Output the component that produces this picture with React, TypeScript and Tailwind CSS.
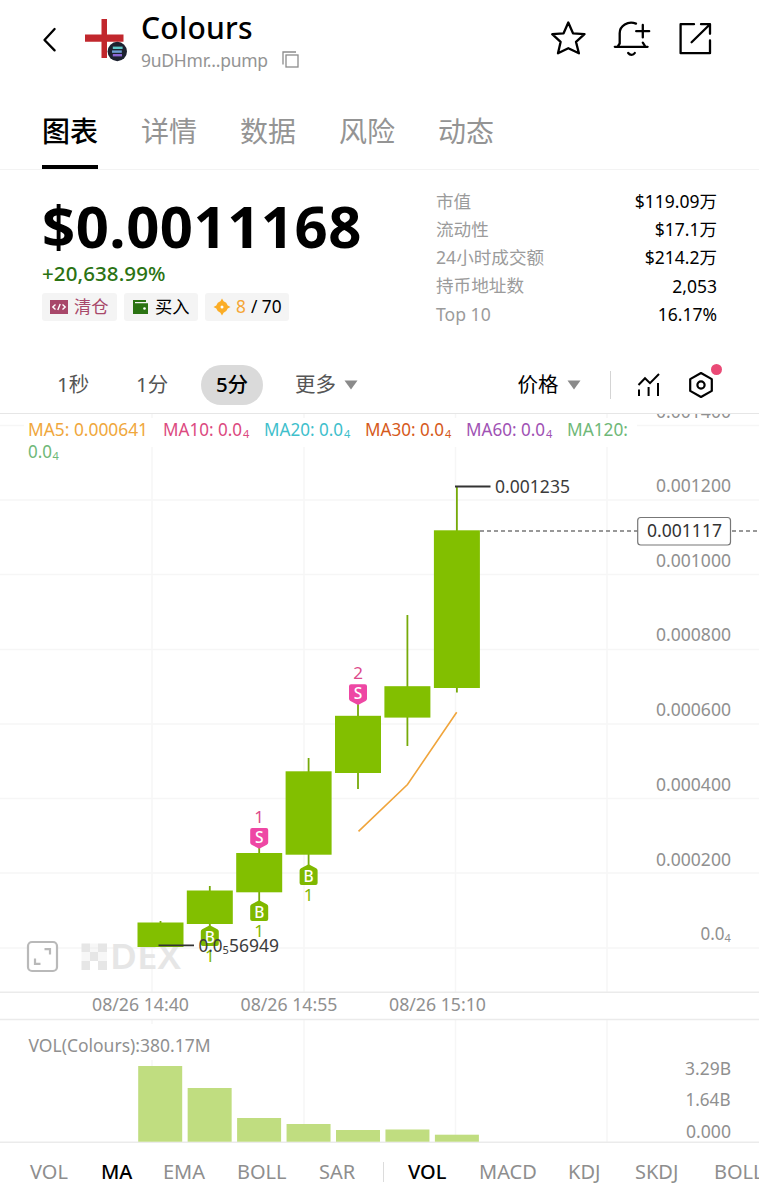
import React from 'react';
import clsx from 'clsx';

const tabs = ['图表', '详情', '数据', '风险', '动态'];

const stats = [
  { label: '市值', value: '$119.09万' },
  { label: '流动性', value: '$17.1万' },
  { label: '24小时成交额', value: '$214.2万' },
  { label: '持币地址数', value: '2,053' },
  { label: 'Top 10', value: '16.17%' },
];

const legend = [
  { name: 'MA5: 0.000641', sub: '', x: 28, width: 120, color: '#f0a73c' },
  { name: 'MA10: 0.0', sub: '4', x: 163, width: 79, color: '#dc4a7f' },
  { name: 'MA20: 0.0', sub: '4', x: 264, width: 79, color: '#3fc0cc' },
  { name: 'MA30: 0.0', sub: '4', x: 365, width: 79, color: '#d65a1b' },
  { name: 'MA60: 0.0', sub: '4', x: 466, width: 79, color: '#a052b4' },
  { name: 'MA120:', sub: '', x: 567, width: 61, color: '#6fb878' },
];

const candles = [
  { x: 160.5, high: 921, top: 922.5, bottom: 947, low: 947 },
  { x: 209.8, high: 886, top: 890.5, bottom: 924, low: 926 },
  { x: 259.2, high: 848, top: 853, bottom: 892.3, low: 901 },
  { x: 308.6, high: 758, top: 771.3, bottom: 854.7, low: 866 },
  { x: 358, high: 704, top: 715.8, bottom: 773, low: 789 },
  { x: 407.4, high: 615, top: 686.2, bottom: 717.6, low: 746 },
  { x: 456.9, high: 487, top: 530.3, bottom: 688, low: 692.5 },
];

const volumes = [1066, 1088, 1118, 1124, 1130, 1129.5, 1134.7];

const priceLabels = [
  { text: '0.001200', y: 492 },
  { text: '0.001000', y: 566.5 },
  { text: '0.000800', y: 641 },
  { text: '0.000600', y: 716 },
  { text: '0.000400', y: 790.5 },
  { text: '0.000200', y: 865.5 },
];

const indicators = [
  { name: 'VOL', width: 'w-[71px]', active: false },
  { name: 'MA', width: 'w-[62px]', active: true },
  { name: 'EMA', width: 'w-[74px]', active: false },
  { name: 'BOLL', width: 'w-[82px]', active: false },
  { name: 'SAR', width: 'w-[64px]', active: false },
];

const subIndicators = [
  { name: 'VOL', width: 'w-[71px]', active: true },
  { name: 'MACD', width: 'w-[89px]', active: false },
  { name: 'KDJ', width: 'w-[67px]', active: false },
  { name: 'SKDJ', width: 'w-[79px]', active: false },
  { name: 'BOLL', width: 'w-[60px]', active: false },
];

const TokenLogo: React.FC = () => (
  <svg width="44" height="46" viewBox="0 0 44 46" className="block">
    <path d="M17.5 1H23V16.5H39.5V23.8H23V40H17.5V23.8H1V16.5H17.5Z" fill="#c1272d" />
    <circle cx="33.3" cy="33.5" r="9.7" fill="#1d2230" />
    <g strokeWidth="2.4">
      <path d="M28.8 29.8H38.6" stroke="#5fc9c9" />
      <path d="M28 33.6H37.8" stroke="#6f9fd6" />
      <path d="M28.8 37.2H38" stroke="#8b66d6" />
    </g>
  </svg>
);

const Header: React.FC = () => (
  <header className="flex h-[92px] items-start pl-[42px] pr-[45px]">
    <svg width="16" height="26" viewBox="0 0 16 26" className="mt-[27px] block" fill="none">
      <path d="M12.6 2L2.5 13L12.6 23.4" stroke="#000" strokeWidth="2.3" strokeLinecap="round" strokeLinejoin="round" />
    </svg>
    <div className="ml-[26px] mt-[18px]">
      <TokenLogo />
    </div>
    <div className="ml-[13px] mt-[8px]">
      <div className="h-10 whitespace-nowrap text-[30px] font-medium leading-10 tracking-[0.3px] text-black">Colours</div>
      <div className="flex h-6 items-center gap-[14px]">
        <span className="whitespace-nowrap text-[17.5px] leading-6 tracking-[-0.25px] text-[#949494]">9uDHmr...pump</span>
        <svg width="18" height="18" viewBox="0 0 18 18" fill="none" stroke="#8c8c8c" strokeWidth="1.3">
          <path d="M1 13.5V1H14" />
          <rect x="4" y="4" width="12" height="12" />
        </svg>
      </div>
    </div>
    <div className="ml-auto mt-[19px] flex gap-[26px]">
      <svg width="38" height="40" viewBox="0 0 38 40" fill="none" stroke="#000" strokeWidth="2.3" strokeLinejoin="round">
        <path d="M19.3 3.5L24 14.3L35.5 15.2L27 22.9L29.9 34.3L19.3 29.2L9 34.3L11.6 22.9L3.2 15.2L14.6 14.3Z" />
      </svg>
      <svg width="38" height="40" viewBox="0 0 38 40" fill="none" stroke="#000" strokeWidth="2.3" strokeLinecap="round" strokeLinejoin="round">
        <path d="M23 4.6C14.8 1.5 6.7 6.8 6.7 14.2V24.5L4.5 27.8M1.8 27.8H34.6M32 27L29.8 23.6" />
        <path d="M29.8 6V18.4M23.2 12.2H36.2" />
        <path d="M15.2 34C17 36.6 20.2 36.6 21.8 34" />
      </svg>
      <svg width="37" height="40" viewBox="0 0 37 40" fill="none" stroke="#000" strokeWidth="2.3" strokeLinecap="round" strokeLinejoin="round">
        <path d="M17 5.2H3.6V34.2H33V21.5" />
        <path d="M24 5.2H33V14.8M32.5 5.7L14.6 23.2" />
      </svg>
    </div>
  </header>
);

const Badge: React.FC<{ className: string; children: React.ReactNode }> = ({ className, children }) => (
  <div className={clsx('flex h-7 items-center rounded-[3px] bg-[#f4f4f4] pl-2 text-[17.3px] leading-7 whitespace-nowrap', className)}>
    {children}
  </div>
);

const Summary: React.FC = () => (
  <section className="flex h-[186px] pl-[42px] pr-[42px]">
    <div className="w-[394px]">
      <div className="mt-[20px] h-[72px] whitespace-nowrap text-[58px] font-bold leading-[72px] tracking-[0.5px] text-black">
        $0.0011168
      </div>
      <div className="h-[31px] whitespace-nowrap text-[20.5px] font-medium leading-[22px] tracking-[0.1px] text-[#2b7313]">+20,638.99%</div>
      <div className="flex gap-[7px]">
        <Badge className="w-[75px] text-[#a8486a]">
          <svg width="18" height="14" viewBox="0 0 18 14" className="mr-[6px]">
            <rect width="18" height="14" fill="#a8486a" />
            <path d="M5.5 4.5L2.8 7L5.5 9.5M12.5 4.5L15.2 7L12.5 9.5M10.2 4L7.8 10" stroke="#fff" strokeWidth="1.4" fill="none" />
          </svg>
          清仓
        </Badge>
        <Badge className="w-[74px] pl-[9px] text-black">
          <svg width="15" height="14" viewBox="0 0 15 14" className="mr-[7px]">
            <path d="M0 0H13V2H2V3.2H15V14H0Z" fill="#2b7313" />
            <circle cx="11.5" cy="8.5" r="1.3" fill="#fff" />
          </svg>
          买入
        </Badge>
        <Badge className="w-[84px] text-black">
          <svg width="18" height="18" viewBox="0 0 18 18" className="mr-[5px]">
            <path d="M9 0.5L10.6 3.3A5.9 5.9 0 0 1 14.7 7.4L17.5 9L14.7 10.6A5.9 5.9 0 0 1 10.6 14.7L9 17.5L7.4 14.7A5.9 5.9 0 0 1 3.3 10.6L0.5 9L3.3 7.4A5.9 5.9 0 0 1 7.4 3.3Z" fill="#fbad26" />
            <circle cx="9" cy="9" r="1.5" fill="#fff" />
          </svg>
          <span className="text-[#f5a637]">8</span>
          <span className="ml-[5px]">/ 70</span>
        </Badge>
      </div>
    </div>
    <dl className="mt-[17px] flex-1">
      {stats.map((item) => (
        <div key={item.label} className="flex h-[28.2px] items-center justify-between whitespace-nowrap text-[17.6px]">
          <dt className="text-[#9b9b9b]">{item.label}</dt>
          <dd className="text-[17.5px] text-black">{item.value}</dd>
        </div>
      ))}
    </dl>
  </section>
);

const Caret: React.FC = () => (
  <svg width="14" height="10" viewBox="0 0 14 10" className="ml-2 block">
    <path d="M0.5 0.5H13.5L7 9.5Z" fill="#8a8a8a" />
  </svg>
);

const Toolbar: React.FC = () => (
  <div className="flex h-[58px] items-center border-b border-[#e6e6e6] pl-[57px] pr-[44px] text-[20.5px] text-[#555]">
    <div className="w-[79px]">1秒</div>
    <div className="w-[65px]">1分</div>
    <div className="flex h-10 w-[62px] items-center justify-center rounded-full bg-[#dadada] font-medium text-black">5分</div>
    <div className="ml-8 flex items-center">
      更多
      <Caret />
    </div>
    <div className="ml-auto flex items-center text-black">
      价格
      <Caret />
      <div className="ml-[29px] h-7 w-[1.5px] bg-[#d4d4d4]" />
      <svg width="24" height="26" viewBox="0 0 24 26" fill="none" stroke="#000" strokeWidth="2" className="ml-[26px]">
        <path d="M1.5 13L8 6.2L13 11.2L22 2" />
        <path d="M2 17.5V24M11.6 15V24M21 11V24" />
      </svg>
      <div className="relative ml-[26px]">
        <svg width="28" height="28" viewBox="0 0 28 28" fill="none" stroke="#000" strokeWidth="2.2" strokeLinejoin="round">
          <path d="M14 2L24.8 8.1V19.9L14 26L3.2 19.9V8.1Z" />
          <circle cx="14" cy="14" r="3.6" />
        </svg>
        <span className="absolute -right-[7px] -top-[7px] h-[11px] w-[11px] rounded-full bg-[#ea4a76]" />
      </div>
    </div>
  </div>
);

/* Trade marker: sells sit above a candle and point down, buys sit below and point up */
const Marker: React.FC<{ x: number; y: number; type: 'B' | 'S'; count: string }> = ({ x, y, type, count }) => {
  const color = type === 'S' ? '#ee47a4' : '#7fb800';
  const shape =
    type === 'S'
      ? 'M-7 -10H7Q9 -10 9 -8V4.5Q9 6 7.6 6.7L0 10.8L-7.6 6.7Q-9 6 -9 4.5V-8Q-9 -10 -7 -10Z'
      : 'M-7 10H7Q9 10 9 8V-4.5Q9 -6 7.6 -6.7L0 -10.8L-7.6 -6.7Q-9 -6 -9 -4.5V8Q-9 10 -7 10Z';
  return (
    <g transform={`translate(${x} ${y})`} textAnchor="middle">
      <path d={shape} fill={color} />
      <text y={type === 'S' ? 5 : 6.5} fontSize="15.5" fontWeight="500" fill="#fff">
        {type}
      </text>
      <text y={type === 'S' ? -15 : 26} fontSize="17" fill={type === 'S' ? '#dc4a8c' : color}>
        {count}
      </text>
    </g>
  );
};

const Chart: React.FC = () => (
  <svg width="759" height="729" viewBox="0 414 759 729" className="block" fontSize="17.3">
    {/* Grid */}
    <g stroke="#f6f6f6" strokeWidth="1.5">
      {[425.5, 500, 574.5, 649.5, 724, 798.5, 873, 948].map((y) => (
        <path key={y} d={`M0 ${y}H759`} />
      ))}
      {[152, 304, 455.5, 607].map((x) => (
        <path key={x} d={`M${x} 414V992M${x} 1020V1142`} />
      ))}
      <path d="M0 992.3H759M0 1019.5H759M0 1142.3H759" stroke="#ebebeb" />
    </g>
    <path d="M24 418H637V447H60V465H24Z" fill="#fff" />
    <path d="M24 1024H214V1060H24Z" fill="#fff" />

    {/* Moving average legend */}
    {legend.map((item) => (
      <g key={item.name} fill={item.color}>
        <text x={item.x} y="436" textLength={item.width} lengthAdjust="spacingAndGlyphs">
          {item.name}
        </text>
        <text x={item.x + item.width + 1} y="438" fontSize="11">
          {item.sub}
        </text>
      </g>
    ))}
    <g fill="#6fb878">
      <text x="28" y="457.5" textLength="24" lengthAdjust="spacingAndGlyphs">0.0</text>
      <text x="52.5" y="459.5" fontSize="11">4</text>
    </g>

    {/* Watermark */}
    <g fill="#e6e6e6">
      <path d="M81.5 943.5H90V952H81.5ZM98 943.5H107V952H98ZM90 952H98V961H90ZM81.5 961H90V970H81.5ZM98 961H107V970H98Z" />
      <path d="M90 943.5H98V952H90ZM81.5 952H90V961H81.5ZM98 952H107V961H98Z" opacity="0.3" />
      <text x="110" y="969" fontSize="35" fontWeight="600" textLength="71" lengthAdjust="spacingAndGlyphs">
        DEX
      </text>
    </g>
    <g fill="none" stroke="#b9b9b9" strokeWidth="2.2">
      <rect x="28" y="942" width="29" height="29" rx="4" fill="#fff" />
      <path d="M44.5 949.2H50V954.5M35 958.5V963.8H40.5" />
    </g>

    {/* Candles */}
    {candles.map((c) => (
      <g key={c.x} fill="#82bf00">
        <path d={`M${c.x} ${c.high}V${c.low}`} stroke="#76aa0a" strokeWidth="1.8" />
        <rect x={c.x - 23} y={c.top} width="46" height={c.bottom - c.top} />
      </g>
    ))}
    <path d="M358.5 831.3L407.5 784.5L456.7 712.3" fill="none" stroke="#f0a53c" strokeWidth="1.6" />

    <Marker x={209.8} y={936} type="B" count="1" />
    <Marker x={259.2} y={911} type="B" count="1" />
    <Marker x={308.6} y={875} type="B" count="1" />
    <Marker x={259.2} y={838} type="S" count="1" />
    <Marker x={358} y={694.3} type="S" count="2" />

    {/* Highest and lowest price */}
    <g fill="#3c3c3c">
      <path d="M455 486.5H490.5M158.5 945.3H194" stroke="#333" strokeWidth="1.8" />
      <text x="495" y="493" textLength="75" lengthAdjust="spacingAndGlyphs">0.001235</text>
      <text x="198.5" y="951.5" textLength="24" lengthAdjust="spacingAndGlyphs">0.0</text>
      <text x="222.5" y="954" fontSize="11">5</text>
      <text x="229" y="951.5" textLength="50" lengthAdjust="spacingAndGlyphs">56949</text>
    </g>

    {/* Price axis */}
    <g fill="#909090">
      <text x="656" y="418" textLength="75" lengthAdjust="spacingAndGlyphs">0.001400</text>
      {priceLabels.map((item) => (
        <text key={item.text} x="656" y={item.y} textLength="75" lengthAdjust="spacingAndGlyphs">
          {item.text}
        </text>
      ))}
      <text x="700.5" y="940" textLength="24" lengthAdjust="spacingAndGlyphs">0.0</text>
      <text x="724.5" y="942" fontSize="11">4</text>
    </g>
    <path d="M480 531H759" stroke="#777" strokeWidth="1.5" strokeDasharray="4 3" />
    <rect x="637.7" y="517.5" width="92.8" height="27.5" rx="3" fill="#fff" stroke="#777" strokeWidth="1.2" />
    <text x="647" y="537.3" fill="#333" textLength="75" lengthAdjust="spacingAndGlyphs">0.001117</text>

    {/* Time axis */}
    <g fill="#909090">
      <text x="92" y="1011" textLength="97" lengthAdjust="spacingAndGlyphs">08/26 14:40</text>
      <text x="240.5" y="1011" textLength="97" lengthAdjust="spacingAndGlyphs">08/26 14:55</text>
      <text x="389" y="1011" textLength="97" lengthAdjust="spacingAndGlyphs">08/26 15:10</text>
    </g>

    {/* Volume */}
    <g fill="#909090">
      <text x="28.5" y="1051.5" textLength="182" lengthAdjust="spacingAndGlyphs">VOL(Colours):380.17M</text>
      <text x="685" y="1075" textLength="46" lengthAdjust="spacingAndGlyphs">3.29B</text>
      <text x="685.5" y="1106.3" textLength="45" lengthAdjust="spacingAndGlyphs">1.64B</text>
      <text x="686" y="1137.5" textLength="45" lengthAdjust="spacingAndGlyphs">0.000</text>
    </g>
    {volumes.map((top, i) => (
      <rect key={i} x={138.2 + i * 49.45} y={top} width="44" height={1141.7 - top} fill="#c0dd80" />
    ))}
  </svg>
);

const App: React.FC = () => (
  <div className='h-[1200px] w-[759px] overflow-hidden bg-white font-["Noto_Sans","Noto_Sans_CJK_SC",sans-serif]'>
    <Header />
    <nav className="flex h-[78px] gap-[43px] border-b border-[#f3f3f3] pl-[42px] text-[28px] text-[#949494]">
      {tabs.map((tab, i) => (
        <div
          key={tab}
          className={clsx('flex w-14 justify-center whitespace-nowrap pt-[19px] leading-10', i === 0 && 'border-b-4 border-black font-medium text-black')}
        >
          {tab}
        </div>
      ))}
    </nav>
    <Summary />
    <Toolbar />
    <Chart />
    <div className="flex h-[57px] items-center overflow-hidden pl-[30px] text-[20px] text-[#8e8e8e]">
      {indicators.map((item) => (
        <div key={item.name} className={clsx('shrink-0', item.width, item.active && 'font-medium text-black')}>
          {item.name}
        </div>
      ))}
      <div className="mr-[24px] h-5 w-px shrink-0 bg-[#dcdcdc]" />
      {subIndicators.map((item) => (
        <div key={item.name} className={clsx('shrink-0', item.width, item.active && 'font-medium text-black')}>
          {item.name}
        </div>
      ))}
    </div>
  </div>
);

export default App;
